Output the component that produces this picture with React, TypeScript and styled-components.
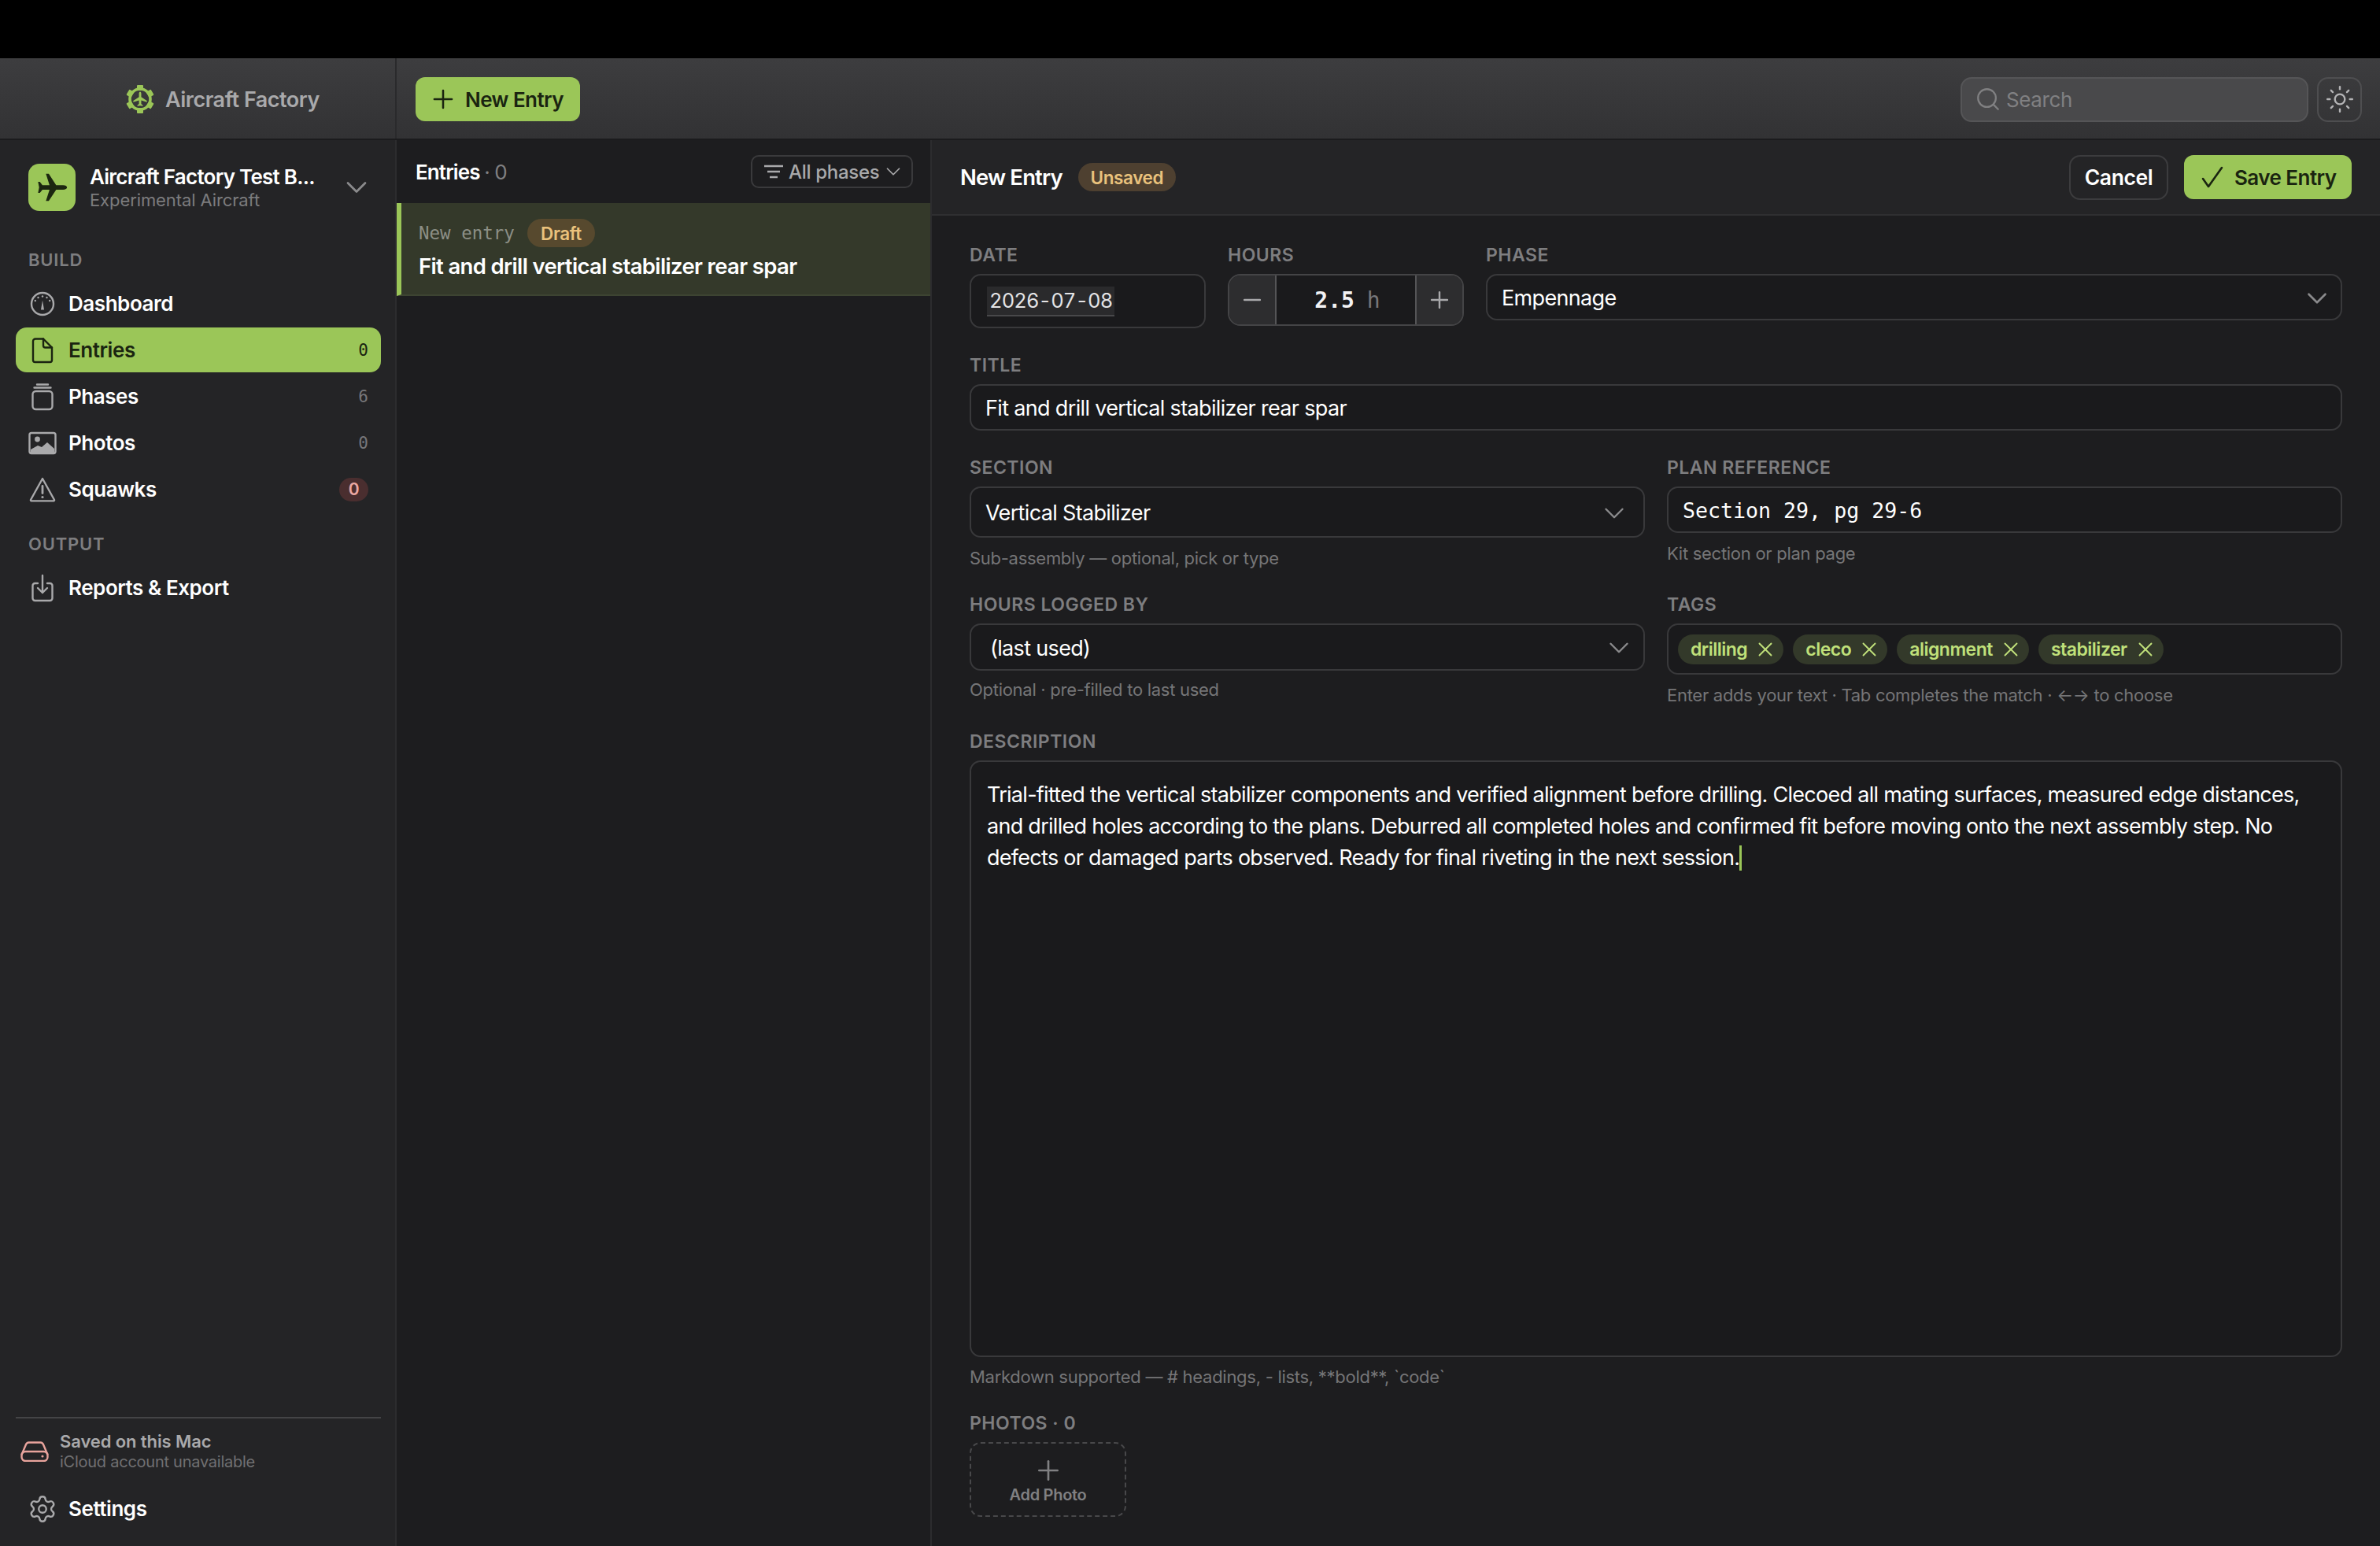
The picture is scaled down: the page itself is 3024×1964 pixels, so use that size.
import React from "react";
import styled, { createGlobalStyle } from "styled-components";
import { ChevronDown, Minus, Plus, Search, Settings, Sun, X } from "lucide-react";

const SANS = `Inter, "Liberation Sans", sans-serif`;
const MONO = `"DejaVu Sans Mono", "Liberation Mono", monospace`;
const GREEN = "#9bc658";

const Global = createGlobalStyle`
  html, body { margin: 0; padding: 0; background: #000; }
  * { box-sizing: border-box; }
  body { font-family: ${SANS}; color: #fff; }
`;

const Page = styled.div`
  width: 3024px;
  height: 1964px;
  display: flex;
  flex-direction: column;
  overflow: hidden;
  background: #000;
  padding-top: 74px;
`;

const TopBar = styled.header`
  height: 104px;
  flex: none;
  display: flex;
  align-items: center;
  background: linear-gradient(#3d3d3f, #323234);
  border-bottom: 2px solid #1b1b1d;
`;
const Brand = styled.div`
  width: 504px;
  height: 100%;
  flex: none;
  display: flex;
  align-items: center;
  gap: 14px;
  padding: 2px 0 0 160px;
  border-right: 2px solid #2a2a2c;
  font-size: 27px;
  font-weight: 600;
  letter-spacing: -0.5px;
  color: #a9a9ab;
`;
const TopActions = styled.div`
  flex: 1;
  display: flex;
  align-items: center;
  padding: 2px 23px 0 24px;
`;
const PrimaryButton = styled.div<{ $w: number; $gap: number; $pl: number }>`
  width: ${(p) => p.$w}px;
  height: 56px;
  padding-left: ${(p) => p.$pl}px;
  gap: ${(p) => p.$gap}px;
  display: flex;
  align-items: center;
  background: ${GREEN};
  border-radius: 12px;
  color: #1a2410;
  font-size: 26px;
  font-weight: 600;
  letter-spacing: -0.55px;
`;
const Spacer = styled.div`
  flex: 1;
`;
const SearchBox = styled.div`
  width: 442px;
  height: 57px;
  display: flex;
  align-items: center;
  gap: 6px;
  padding-left: 16px;
  background: #49494b;
  border: 2px solid #555557;
  border-radius: 14px;
  color: #808082;
  font-size: 26px;
  letter-spacing: -0.4px;
`;
const IconButton = styled.div`
  width: 57px;
  height: 57px;
  margin-left: 11px;
  display: flex;
  align-items: center;
  justify-content: center;
  border: 2px solid #4e4e50;
  border-radius: 14px;
  color: #b4b4b6;
`;

const Body = styled.div`
  flex: 1;
  display: flex;
  min-height: 0;
`;

const Sidebar = styled.aside`
  width: 504px;
  flex: none;
  display: flex;
  flex-direction: column;
  background: #242426;
  border-right: 2px solid #2c2c2e;
  padding: 30px 18px 0 20px;
`;
const Workspace = styled.div`
  height: 60px;
  display: flex;
  align-items: center;
  padding-left: 16px;
`;
const WorkspaceIcon = styled.div`
  width: 60px;
  height: 60px;
  flex: none;
  border-radius: 14px;
  background: ${GREEN};
  display: flex;
  align-items: center;
  justify-content: center;
`;
const WorkspaceText = styled.div`
  margin-left: 18px;
  flex: 1;
  display: flex;
  flex-direction: column;
`;
const WorkspaceName = styled.div`
  font-size: 26px;
  font-weight: 600;
  line-height: 32px;
  letter-spacing: -0.75px;
`;
const WorkspaceKind = styled.div`
  font-size: 22px;
  line-height: 26px;
  letter-spacing: -0.1px;
  color: #7c7c7e;
`;
const WorkspaceChevron = styled.div`
  color: #8a8a8c;
  display: flex;
  margin-right: 9px;
`;
const SectionLabel = styled.div<{ $mt: number }>`
  margin-top: ${(p) => p.$mt}px;
  padding-left: 16px;
  height: 24px;
  line-height: 24px;
  font-size: 22px;
  font-weight: 600;
  letter-spacing: 0.8px;
  color: #7e7e80;
`;
const NavList = styled.div`
  margin-top: 15px;
  display: flex;
  flex-direction: column;
  gap: 2px;
`;
const NavItem = styled.div<{ $active?: boolean }>`
  height: 57px;
  display: flex;
  align-items: center;
  border-radius: 14px;
  padding-right: 16px;
  background: ${(p) => (p.$active ? GREEN : "transparent")};
  color: ${(p) => (p.$active ? "#1a2410" : "#fff")};
  font-size: 26px;
  font-weight: 600;
  letter-spacing: -0.45px;
`;
const NavIcon = styled.span<{ $active?: boolean }>`
  width: 67px;
  flex: none;
  display: flex;
  justify-content: center;
  color: ${(p) => (p.$active ? "#1a2410" : "#a9a9ab")};
`;
const NavLabel = styled.span`
  flex: 1;
`;
const NavCount = styled.span<{ $active?: boolean }>`
  font-family: ${MONO};
  font-size: 21px;
  font-weight: 400;
  letter-spacing: 0;
  color: ${(p) => (p.$active ? "#1a2410" : "#77777a")};
`;
const AlertCount = styled.span`
  width: 37px;
  height: 30px;
  border-radius: 15px;
  background: #4a2e2f;
  color: #eca8a2;
  font-size: 21px;
  font-weight: 600;
  display: flex;
  align-items: center;
  justify-content: center;
`;
const SidebarFoot = styled.div`
  margin-top: auto;
  border-top: 2px solid #444446;
  padding-top: 13px;
  padding-bottom: 19px;
`;
const StorageRow = styled.div`
  display: flex;
  align-items: center;
  gap: 14px;
  padding-left: 6px;
  height: 58px;
`;
const StorageText = styled.div`
  display: flex;
  flex-direction: column;
`;
const StorageTitle = styled.div`
  font-size: 22px;
  line-height: 27px;
  font-weight: 600;
  letter-spacing: -0.1px;
  color: #a9a9ab;
`;
const StorageSub = styled.div`
  font-size: 20px;
  line-height: 25px;
  letter-spacing: -0.25px;
  color: #707072;
`;
const FootNav = styled(NavItem)`
  margin-top: 15px;
`;

const ListPanel = styled.section`
  width: 680px;
  flex: none;
  display: flex;
  flex-direction: column;
  background: #1d1d1f;
  border-right: 2px solid #2c2c2e;
`;
const ListHeader = styled.div`
  height: 80px;
  flex: none;
  display: flex;
  align-items: center;
  justify-content: space-between;
  padding: 0 22px 0 24px;
`;
const ListTitle = styled.div`
  font-size: 26px;
  font-weight: 600;
  letter-spacing: -0.9px;
`;
const ListCount = styled.span`
  color: #808082;
  font-weight: 400;
`;
const FilterButton = styled.div`
  width: 206px;
  height: 42px;
  display: flex;
  align-items: center;
  gap: 7px;
  padding-left: 15px;
  border: 2px solid #3a3a3c;
  border-radius: 10px;
  font-size: 24px;
  font-weight: 500;
  letter-spacing: -0.3px;
  color: #a9a9ab;
`;
const FilterChevron = styled(ChevronDown)`
  margin-left: -4px;
  flex: none;
`;
const EntryCard = styled.div`
  height: 118px;
  display: flex;
  flex-direction: column;
  padding: 20px 0 0 22px;
  background: #34392a;
  border-left: 6px solid ${GREEN};
  border-bottom: 2px solid #3d4432;
`;
const EntryMeta = styled.div`
  display: flex;
  align-items: center;
  gap: 16px;
`;
const EntryStamp = styled.span`
  font-family: ${MONO};
  font-size: 22.5px;
  color: #8c8f86;
`;
const Pill = styled.span<{ $bg: string; $w: number }>`
  width: ${(p) => p.$w}px;
  height: 36px;
  display: inline-flex;
  align-items: center;
  justify-content: center;
  border-radius: 18px;
  background: ${(p) => p.$bg};
  color: #eac27c;
  font-size: 22.5px;
  font-weight: 600;
  letter-spacing: -0.4px;
`;
const EntryTitle = styled.div`
  margin-top: 6px;
  font-size: 27.5px;
  line-height: 36px;
  font-weight: 600;
  letter-spacing: -0.65px;
`;

const Editor = styled.main`
  flex: 1;
  display: flex;
  flex-direction: column;
  min-width: 0;
  background: #1d1d1f;
`;
const EditorHeader = styled.div`
  height: 96px;
  flex: none;
  display: flex;
  align-items: center;
  gap: 20px;
  padding: 0 36px;
  background: #242426;
  border-bottom: 2px solid #2f2f31;
`;
const EditorTitle = styled.div`
  font-size: 27.5px;
  font-weight: 600;
  letter-spacing: -0.85px;
`;
const CancelButton = styled.div`
  width: 126px;
  height: 57px;
  display: flex;
  align-items: center;
  justify-content: center;
  border: 2px solid #3c3c3e;
  border-radius: 14px;
  font-size: 26.5px;
  font-weight: 600;
  letter-spacing: -0.4px;
`;

const Form = styled.div`
  flex: 1;
  display: flex;
  flex-direction: column;
  padding: 38px 48px 0;
`;
const Row = styled.div<{ $cols: string; $mt?: number }>`
  display: grid;
  grid-template-columns: ${(p) => p.$cols};
  column-gap: 28px;
  align-items: start;
  margin-top: ${(p) => p.$mt ?? 0}px;
`;
const Field = styled.div`
  display: flex;
  flex-direction: column;
  min-width: 0;
`;
const Label = styled.div`
  height: 24px;
  line-height: 24px;
  margin-bottom: 12px;
  font-size: 23px;
  font-weight: 600;
  letter-spacing: 0.5px;
  color: #7e7e80;
`;
const Control = styled.div<{ $h: number; $pl?: number; $pr?: number; $mono?: boolean }>`
  height: ${(p) => p.$h}px;
  display: flex;
  align-items: center;
  justify-content: space-between;
  padding: 2px ${(p) => p.$pr ?? 20}px 0 ${(p) => p.$pl ?? 18}px;
  background: #1a1a1c;
  border: 2px solid #39393b;
  border-radius: 14px;
  color: #fff;
  font-size: ${(p) => (p.$mono ? 26.6 : 27)}px;
  letter-spacing: ${(p) => (p.$mono ? 0 : -0.66)}px;
  font-family: ${(p) => (p.$mono ? MONO : SANS)};
`;
const DateField = styled.span`
  height: 38px;
  margin-top: -2px;
  display: flex;
  align-items: center;
  padding: 0 3px;
  background: #2a2a2c;
  border-bottom: 2px solid #48484a;
  color: #e4e4e6;
  font-size: 25.5px;
  letter-spacing: -0.9px;
  font-variant-numeric: tabular-nums;
`;
const Stepper = styled.div`
  height: 66px;
  display: grid;
  grid-template-columns: 60px 1fr 60px;
  background: #1a1a1c;
  border: 2px solid #444446;
  border-radius: 16px;
  overflow: hidden;
`;
const StepButton = styled.div<{ $side: "l" | "r" }>`
  display: flex;
  align-items: center;
  justify-content: center;
  background: #2d2d2f;
  color: #a9a9ab;
  ${(p) => (p.$side === "l" ? "border-right" : "border-left")}: 2px solid #555557;
`;
const StepValue = styled.div`
  display: flex;
  align-items: baseline;
  justify-content: center;
  align-self: center;
  gap: 16px;
  padding-left: 4px;
  font-family: ${MONO};
  font-size: 28px;
  font-weight: 700;
  color: #f2f2f4;
`;
const StepUnit = styled.span`
  font-weight: 400;
  color: #77777a;
`;
const Help = styled.div<{ $mt?: number }>`
  height: 26px;
  line-height: 26px;
  margin-top: ${(p) => p.$mt ?? 13}px;
  font-size: 22px;
  letter-spacing: -0.28px;
  color: #757577;
`;
const Chevron = styled(ChevronDown)`
  color: #8a8a8c;
  flex: none;
`;
const TagBox = styled.div`
  height: 65px;
  display: flex;
  align-items: center;
  gap: 12px;
  padding-left: 12px;
  background: #1a1a1c;
  border: 2px solid #39393b;
  border-radius: 14px;
`;
const Tag = styled.span`
  height: 38px;
  display: inline-flex;
  align-items: center;
  gap: 8px;
  padding: 0 8px 0 16px;
  border-radius: 19px;
  background: #33392a;
  color: #c0e07a;
  font-size: 23px;
  font-weight: 600;
  letter-spacing: -0.5px;
`;
const Description = styled.div`
  height: 758px;
  padding: 22px 22px 0 20px;
  background: #1a1a1c;
  border: 2px solid #39393b;
  border-radius: 14px;
  font-size: 27px;
  line-height: 40px;
  letter-spacing: -0.72px;
  color: #fff;
`;
const Caret = styled.span`
  display: inline-block;
  width: 3px;
  height: 32px;
  vertical-align: -7px;
  background: ${GREEN};
`;
const AddPhoto = styled.div`
  width: 199px;
  height: 95px;
  display: flex;
  flex-direction: column;
  align-items: center;
  justify-content: center;
  border: 2px dashed #48484a;
  border-radius: 14px;
  color: #808082;
  font-size: 20px;
  line-height: 23px;
  font-weight: 600;
  letter-spacing: -0.3px;
`;

const PLANE =
  "M22 12c0-.9-1.1-1.5-2.6-1.5h-4.6L9.900 3H8l2.400 7.500H5.700L4 8.300H2.800l.7 3.700-.7 3.700H4l1.700-2.200h4.700L8 21h1.900l4.900-7.500h4.600c1.500 0 2.600-.6 2.600-1.500Z";

function Logo() {
  return (
    <svg width="36" height="36" viewBox="0 0 36 36" fill={GREEN}>
      {[0, 60, 120, 180, 240, 300].map((a) => (
        <rect key={a} x="14" y="0" width="8" height="7" rx="1" transform={`rotate(${a} 18 18)`} />
      ))}
      <circle cx="18" cy="18" r="13" fill="none" stroke={GREEN} strokeWidth="3.6" />
      <g transform="rotate(-90 18 18) translate(6.5 6.5) scale(0.96)">
        <path d={PLANE} />
      </g>
    </svg>
  );
}

const Ic: React.FC<{ children: React.ReactNode }> = ({ children }) => (
  <svg width={36} height={36} viewBox="0 0 36 36" fill="none" stroke="currentColor" strokeWidth="2.4" strokeLinecap="round" strokeLinejoin="round">
    {children}
  </svg>
);

const GaugeIcon = () => (
  <Ic>
    <circle cx="18" cy="18" r="14" />
    <path d="M18 13.500 L20 25.500 H16 Z" fill="currentColor" stroke="none" />
    {[
      [18, 8.500],
      [12.500, 10],
      [23.500, 10],
      [8.800, 14],
      [27.200, 14],
    ].map(([x, y]) => (
      <circle key={x} cx={x} cy={y} r="1.2" fill="currentColor" stroke="none" />
    ))}
  </Ic>
);
const FileIcon = () => (
  <Ic>
    <path d="M6 6.500a3 3 0 0 1 3-3h10l11 11v16a2.500 2.500 0 0 1-2.500 2.500h-19A2.500 2.500 0 0 1 6 30.500Z" />
    <path d="M19 3.500V12a2.500 2.500 0 0 0 2.500 2.500H30" />
  </Ic>
);
const StackIcon = () => (
  <Ic>
    <rect x="5.500" y="11" width="25" height="23" rx="4" />
    <path d="M7.500 6.500h21M11 2.500h14" />
  </Ic>
);
const PhotoIcon = () => (
  <Ic>
    <rect x="1.500" y="5" width="33" height="26" rx="2.500" />
    <circle cx="11.500" cy="13" r="3.400" fill="currentColor" stroke="none" />
    <path d="M3 30v-4l9-5 5 2 7-6 9 8v5Z" fill="currentColor" stroke="none" />
  </Ic>
);
const AlertIcon = () => (
  <Ic>
    <path d="M18 4 33 31a1 1 0 0 1-.9 1.400H3.900A1 1 0 0 1 3 31Z" />
    <path d="M18 13.500v9" strokeWidth="2.800" />
    <circle cx="18" cy="27.500" r="1.600" fill="currentColor" stroke="none" />
  </Ic>
);
const ExportIcon = () => (
  <Ic>
    <path d="M12 12H8.500a3 3 0 0 0-3 3v16a3 3 0 0 0 3 3h19a3 3 0 0 0 3-3V15a3 3 0 0 0-3-3H24" />
    <path d="M18 2v22M12 18l6 6 6-6" />
  </Ic>
);
const DriveIcon = () => (
  <svg width="36" height="26" viewBox="0 0 36 26" fill="none" stroke="#e8a39c" strokeWidth="2.400" strokeLinejoin="round">
    <path d="M1.500 17 7 4a4 4 0 0 1 3.500-2.500h15A4 4 0 0 1 29 4l5.500 13" />
    <rect x="1.500" y="13" width="33" height="12" rx="5" />
    <circle cx="28" cy="19" r="1.600" fill="#e8a39c" stroke="none" />
  </svg>
);
const FilterIcon = () => (
  <svg width="24" height="18" viewBox="0 0 24 18" fill="none" stroke="currentColor" strokeWidth="2.400">
    <path d="M0 2h24M4 9h16M7 16h10" />
  </svg>
);
const TinyCheck = () => (
  <svg width="28" height="28" viewBox="0 0 28 28" fill="none" stroke="#1a2410" strokeWidth="2.600" strokeLinecap="round" strokeLinejoin="round">
    <path d="M2 16l7 10L26 2" />
  </svg>
);

const NAV = [
  { label: "Dashboard", icon: <GaugeIcon /> },
  { label: "Entries", icon: <FileIcon />, count: "0", active: true },
  { label: "Phases", icon: <StackIcon />, count: "6" },
  { label: "Photos", icon: <PhotoIcon />, count: "0" },
  { label: "Squawks", icon: <AlertIcon />, alert: "0" },
];
const TAGS = ["drilling", "cleco", "alignment", "stabilizer"];

export default function App() {
  return (
    <Page>
      <Global />
      <TopBar>
        <Brand>
          <Logo />
          Aircraft Factory
        </Brand>
        <TopActions>
          <PrimaryButton $w={209} $gap={9} $pl={16}>
            <Plus size={38} strokeWidth={1.6} />
            New Entry
          </PrimaryButton>
          <Spacer />
          <SearchBox>
            <Search size={34} strokeWidth={1.6} />
            Search
          </SearchBox>
          <IconButton>
            <Sun size={38} strokeWidth={1.5} />
          </IconButton>
        </TopActions>
      </TopBar>
      <Body>
        <Sidebar>
          <Workspace>
            <WorkspaceIcon>
              <svg width="46" height="46" viewBox="0 0 24 24" fill="#1c2610">
                <path d={PLANE} />
              </svg>
            </WorkspaceIcon>
            <WorkspaceText>
              <WorkspaceName>Aircraft Factory Test B...</WorkspaceName>
              <WorkspaceKind>Experimental Aircraft</WorkspaceKind>
            </WorkspaceText>
            <WorkspaceChevron>
              <ChevronDown size={44} strokeWidth={1.5} />
            </WorkspaceChevron>
          </Workspace>
          <SectionLabel $mt={50}>BUILD</SectionLabel>
          <NavList>
            {NAV.map((n) => (
              <NavItem key={n.label} $active={n.active}>
                <NavIcon $active={n.active}>{n.icon}</NavIcon>
                <NavLabel>{n.label}</NavLabel>
                {n.count && <NavCount $active={n.active}>{n.count}</NavCount>}
                {n.alert && <AlertCount>{n.alert}</AlertCount>}
              </NavItem>
            ))}
          </NavList>
          <SectionLabel $mt={29}>OUTPUT</SectionLabel>
          <NavList>
            <NavItem>
              <NavIcon><ExportIcon /></NavIcon>
              <NavLabel>Reports &amp; Export</NavLabel>
            </NavItem>
          </NavList>
          <SidebarFoot>
            <StorageRow>
              <DriveIcon />
              <StorageText>
                <StorageTitle>Saved on this Mac</StorageTitle>
                <StorageSub>iCloud account unavailable</StorageSub>
              </StorageText>
            </StorageRow>
            <FootNav>
              <NavIcon><Settings size={38} strokeWidth={1.5} /></NavIcon>
              <NavLabel>Settings</NavLabel>
            </FootNav>
          </SidebarFoot>
        </Sidebar>
        <ListPanel>
          <ListHeader>
            <ListTitle>
              Entries <ListCount>· 0</ListCount>
            </ListTitle>
            <FilterButton>
              <FilterIcon />
              All phases
              <FilterChevron size={30} strokeWidth={1.4} />
            </FilterButton>
          </ListHeader>
          <EntryCard>
            <EntryMeta>
              <EntryStamp>New entry</EntryStamp>
              <Pill $bg="#57492e" $w={86}>Draft</Pill>
            </EntryMeta>
            <EntryTitle>Fit and drill vertical stabilizer rear spar</EntryTitle>
          </EntryCard>
        </ListPanel>
        <Editor>
          <EditorHeader>
            <EditorTitle>New Entry</EditorTitle>
            <Pill $bg="#4e4030" $w={124}>Unsaved</Pill>
            <Spacer />
            <CancelButton>Cancel</CancelButton>
            <PrimaryButton $w={213} $gap={14} $pl={22}>
              <TinyCheck />
              Save Entry
            </PrimaryButton>
          </EditorHeader>
          <Form>
            <Row $cols="300px 300px 1fr">
              <Field>
                <Label>DATE</Label>
                <Control $h={69} $pl={20}>
                  <DateField>2026-07-08</DateField>
                </Control>
              </Field>
              <Field>
                <Label>HOURS</Label>
                <Stepper>
                  <StepButton $side="l"><Minus size={34} strokeWidth={1.7} /></StepButton>
                  <StepValue>2.5<StepUnit>h</StepUnit></StepValue>
                  <StepButton $side="r"><Plus size={34} strokeWidth={1.7} /></StepButton>
                </Stepper>
              </Field>
              <Field>
                <Label>PHASE</Label>
                <Control $h={59} $pr={9}>
                  Empennage
                  <Chevron size={42} strokeWidth={1.5} />
                </Control>
              </Field>
            </Row>
            <Row $cols="1fr" $mt={35}>
              <Field>
                <Label>TITLE</Label>
                <Control $h={59}>Fit and drill vertical stabilizer rear spar</Control>
              </Field>
            </Row>
            <Row $cols="1fr 1fr" $mt={35}>
              <Field>
                <Label>SECTION</Label>
                <Control $h={65} $pr={16}>
                  Vertical Stabilizer
                  <Chevron size={42} strokeWidth={1.4} />
                </Control>
                <Help>Sub-assembly — optional, pick or type</Help>
              </Field>
              <Field>
                <Label>PLAN REFERENCE</Label>
                <Control $h={59} $mono>Section 29, pg 29-6</Control>
                <Help>Kit section or plan page</Help>
              </Field>
            </Row>
            <Row $cols="1fr 1fr" $mt={34}>
              <Field>
                <Label>HOURS LOGGED BY</Label>
                <Control $h={60} $pl={24} $pr={10}>
                  (last used)
                  <Chevron size={42} strokeWidth={1.4} />
                </Control>
                <Help $mt={11}>Optional · pre-filled to last used</Help>
              </Field>
              <Field>
                <Label>TAGS</Label>
                <TagBox>
                  {TAGS.map((t) => (
                    <Tag key={t}>
                      {t}
                      <X size={30} strokeWidth={1.5} />
                    </Tag>
                  ))}
                </TagBox>
                <Help>Enter adds your text · Tab completes the match · ←→ to choose</Help>
              </Field>
            </Row>
            <Row $cols="1fr" $mt={34}>
              <Field>
                <Label>DESCRIPTION</Label>
                <Description>
                  Trial-fitted the vertical stabilizer components and verified alignment before drilling. Clecoed all mating surfaces, measured edge distances, and drilled holes according to the plans. Deburred all completed holes and confirmed fit before moving onto the next assembly step. No defects or damaged parts observed. Ready for final riveting in the next session.
                  <Caret />
                </Description>
                <Help $mt={12}>Markdown supported — # headings, - lists, **bold**, `code`</Help>
              </Field>
            </Row>
            <Row $cols="1fr" $mt={34}>
              <Field>
                <Label>PHOTOS · 0</Label>
                <AddPhoto>
                  <Plus size={40} strokeWidth={1.6} />
                  Add Photo
                </AddPhoto>
              </Field>
            </Row>
          </Form>
        </Editor>
      </Body>
    </Page>
  );
}
